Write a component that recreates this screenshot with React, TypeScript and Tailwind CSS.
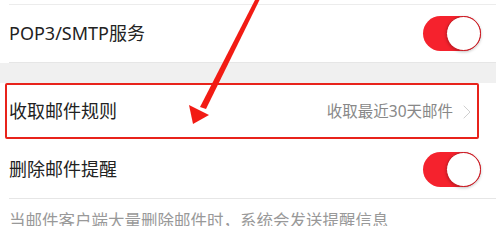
import { ChevronRight } from "lucide-react";

function Toggle() {
  return (
    <div className="relative h-[35px] w-[58px] rounded-full bg-[#f5222d]">
      <div className="absolute right-0 top-0 h-[35px] w-[35px] rounded-full border-[1.5px] border-[#c8161e] bg-white shadow-[0_1px_3px_rgba(0,0,0,0.25)]" />
    </div>
  );
}

function Row({ children, divider = true }: { children: React.ReactNode; divider?: boolean }) {
  return (
    <div className="pl-[9px]">
      <div
        className={`flex items-center justify-between pr-[15px] ${
          divider ? "border-b border-[#e6e6e6]" : ""
        }`}
      >
        {children}
      </div>
    </div>
  );
}

export default function App() {
  return (
    <div
      className="relative h-[226px] w-[496px] overflow-hidden bg-white"
      style={{ fontFamily: '"Noto Sans", "Noto Sans CJK SC", sans-serif' }}
    >
      <div className="h-[4px]" />
      <div className="ml-[9px] border-t border-[#ececec]" />

      <Row>
        <div className="flex h-[57px] w-full items-center justify-between">
          <span className="text-[18px] text-[#222]">POP3/SMTP服务</span>
          <Toggle />
        </div>
      </Row>

      <div className="h-[20px] bg-[#f0f0f0]" />

      <div className="flex h-[57px] items-center justify-between pl-[9px] pr-[17px]">
        <span className="text-[18px] text-[#222]">收取邮件规则</span>
        <div className="flex items-center gap-[2px]">
          <span className="text-[15.5px] text-[#888]">收取最近30天邮件</span>
          <ChevronRight className="h-[24px] w-[24px] text-[#cfcfcf]" strokeWidth={1} />
        </div>
      </div>

      <Row>
        <div className="flex h-[58px] w-full items-center justify-between">
          <span className="text-[18px] text-[#222]">删除邮件提醒</span>
          <Toggle />
        </div>
      </Row>

      <div className="pl-[9px] pt-[10px] text-[16.5px] leading-[24px] text-[#999] whitespace-nowrap">
        当邮件客户端大量删除邮件时，系统会发送提醒信息
      </div>

      {/* annotation box */}
      <div className="absolute left-[5px] top-[83px] h-[56px] w-[474px] rounded-[2px] border-2 border-[#e8231b]" />

      {/* annotation arrow */}
      <svg className="absolute left-0 top-0" width="496" height="226" viewBox="0 0 496 226">
        <path d="M256 -2 L260 -1 L206 109 L200 107 Z" fill="#f21b14" />
        <path d="M193 124 L189 105 L209 115 Z" fill="#f21b14" />
      </svg>
    </div>
  );
}
